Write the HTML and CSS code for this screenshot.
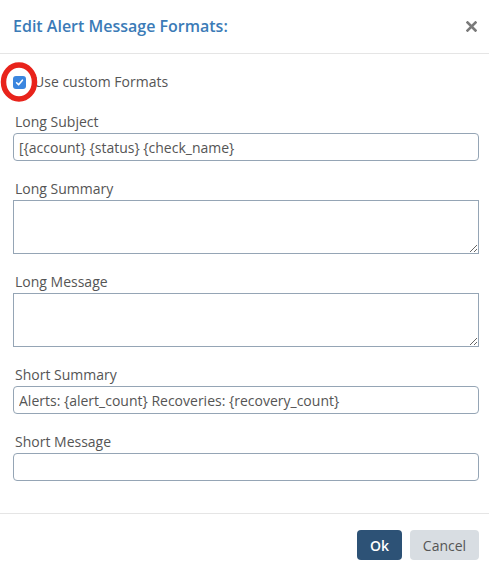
FILE: index.html
```html
<!DOCTYPE html>
<html>
<head>
<meta charset="utf-8">
<link rel="stylesheet" href="styles.css">
</head>
<body>
<div class="modal">
  <div class="modal-header">
    <h4 class="title">Edit Alert Message Formats:</h4>
    <span class="close" aria-label="Close">
      <svg width="11" height="11" viewBox="0 0 11 11"><path d="M1.5 1.5 L9.5 9.5 M9.5 1.5 L1.5 9.5" stroke="#7a7a7a" stroke-width="2.6" stroke-linecap="square"/></svg>
    </span>
  </div>
  <div class="modal-body">
    <div class="check-row">
      <span class="checkbox">
        <svg width="13" height="13" viewBox="0 0 13 13"><rect x="0" y="0" width="13" height="13" rx="3" fill="#3b86df"/><path d="M3.6 6.8 L5.6 8.8 L9.4 4.2" fill="none" stroke="#fff" stroke-width="1.6" stroke-linecap="round" stroke-linejoin="round"/></svg>
      </span>
      <span class="check-label">Use custom Formats</span>
      <svg class="marker" width="40" height="44" viewBox="0 0 40 44"><ellipse cx="20" cy="22" rx="15.5" ry="17" fill="none" stroke="#e8231b" stroke-width="5.5"/></svg>
    </div>
    <div class="group">
      <label class="label">Long Subject</label>
      <input class="field" type="text" value="[{account} {status} {check_name}">
    </div>
    <div class="group">
      <label class="label">Long Summary</label>
      <textarea class="area"></textarea>
    </div>
    <div class="group">
      <label class="label">Long Message</label>
      <textarea class="area"></textarea>
    </div>
    <div class="group">
      <label class="label">Short Summary</label>
      <input class="field" type="text" value="Alerts: {alert_count} Recoveries: {recovery_count}">
    </div>
    <div class="group">
      <label class="label">Short Message</label>
      <input class="field" type="text" value="">
    </div>
  </div>
  <div class="modal-footer">
    <button class="btn btn-ok">Ok</button>
    <button class="btn btn-cancel">Cancel</button>
  </div>
</div>
</body>
</html>
```

FILE: styles.css
```css
html, body {
  margin: 0;
  padding: 0;
  background: #fff;
}
body {
  font-family: "Open Sans", "Liberation Sans", sans-serif;
  font-size: 14px;
  color: #555;
}
.modal {
  width: 489px;
  height: 570px;
  overflow: hidden;
  display: flex;
  flex-direction: column;
}
.modal-header {
  box-sizing: border-box;
  height: 54px;
  border-bottom: 1px solid #e5e5e5;
  display: flex;
  align-items: center;
  justify-content: space-between;
  padding: 0 12px 0 13px;
}
.title {
  margin: 0;
  font-size: 16px;
  font-weight: 600;
  color: #3b7bb7;
  line-height: 20px;
  padding-bottom: 2px;
}
.close {
  display: flex;
  width: 11px;
  height: 11px;
  margin-bottom: 1px;
}
.modal-body {
  padding: 18px 10px 0 13px;
  display: flex;
  flex-direction: column;
}
.check-row {
  position: relative;
  display: flex;
  align-items: center;
  height: 20px;
  margin-bottom: 20px;
}
.checkbox {
  display: flex;
  width: 13px;
  height: 13px;
  margin-right: 8px;
}
.check-label {
  line-height: 20px;
}
.marker {
  position: absolute;
  left: -14px;
  top: -12px;
}
.group {
  display: flex;
  flex-direction: column;
  margin-bottom: 18px;
}
.label {
  display: block;
  line-height: 20px;
  margin-bottom: 1px;
  margin-left: 2px;
}
.field {
  box-sizing: border-box;
  width: 466px;
  height: 28px;
  border: 1px solid #95a5b5;
  border-radius: 4px;
  padding: 0 5px;
  font-family: "Open Sans", "Liberation Sans", sans-serif;
  font-size: 14px;
  color: #555;
  background: #fff;
  outline: none;
}
.area {
  box-sizing: border-box;
  width: 466px;
  height: 54px;
  border: 1px solid #95a5b5;
  border-radius: 0;
  padding: 4px 5px;
  font-family: "Open Sans", "Liberation Sans", sans-serif;
  font-size: 14px;
  color: #555;
  background: #fff;
  outline: none;
  display: block;
  margin: 0;
}
.modal-footer {
  margin-top: 14px;
  border-top: 1px solid #e5e5e5;
  padding: 16px 10px 0 0;
  display: flex;
  justify-content: flex-end;
  gap: 8px;
}
.btn {
  height: 30px;
  border: none;
  border-radius: 4px;
  font-family: "Open Sans", "Liberation Sans", sans-serif;
  font-size: 14px;
  padding: 0 12px;
  cursor: pointer;
}
.btn-ok {
  width: 45px;
  background: #2d5276;
  color: #fff;
  font-weight: 600;
}
.btn-cancel {
  width: 69px;
  background: #d8dde2;
  color: #555;
}
```
